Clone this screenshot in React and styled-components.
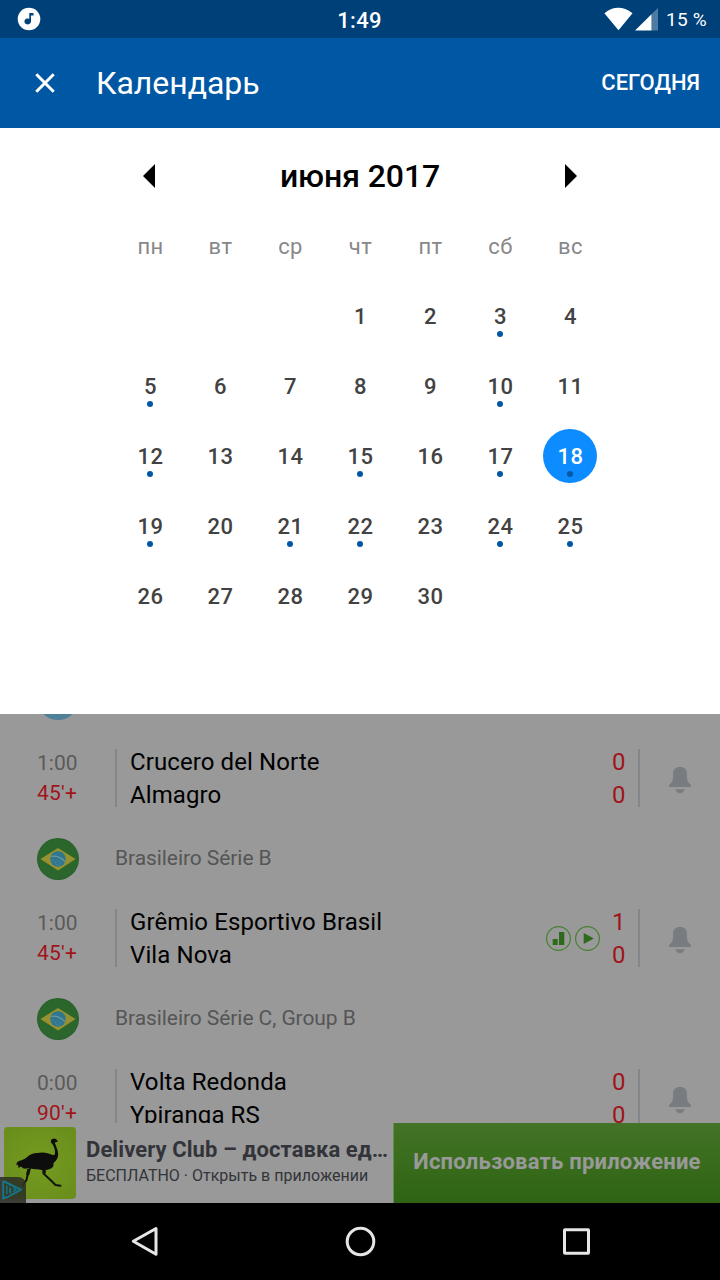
import React from 'react'
import styled, { createGlobalStyle } from 'styled-components'

const weekDays = ['пн', 'вт', 'ср', 'чт', 'пт', 'сб', 'вс']
const matchDays = [3, 5, 10, 12, 15, 17, 18, 19, 21, 22, 24, 25]
const selectedDay = 18
const firstDayOffset = 3
const days = Array.from({ length: 30 }, (_, i) => i + 1)

const sections = [
    {
        flag: 'argentina',
        league: '',
        time: '1:00',
        status: "45'+",
        teams: ['Crucero del Norte', 'Almagro'],
        score: [0, 0],
    },
    {
        flag: 'brazil',
        league: 'Brasileiro Série B',
        time: '1:00',
        status: "45'+",
        teams: ['Grêmio Esportivo Brasil', 'Vila Nova'],
        score: [1, 0],
        media: true,
    },
    {
        flag: 'brazil',
        league: 'Brasileiro Série C, Group B',
        time: '0:00',
        status: "90'+",
        teams: ['Volta Redonda', 'Ypiranga RS'],
        score: [0, 0],
    },
]

const Flag = ({ country }) => (
    <svg width="42" height="42" viewBox="0 0 42 42">
        {country === 'argentina' ? (
            <circle cx="21" cy="21" r="21" fill="#4f8199" />
        ) : (
            <>
                <circle cx="21" cy="21" r="21" fill="#286029" />
                <circle cx="21" cy="21" r="20" fill="#2b672d" />
                <path d="M3.500 21 21 10 38.500 21 21 32.500Z" fill="#98912f" />
                <circle cx="21" cy="21" r="7.800" fill="#2f7690" />
                <path d="M13.800 18.500Q21 16.800 28 23.500" fill="none" stroke="#6f9a9c" strokeWidth="1.100" />
                <path
                    d="M15.500 22.500h1M18 24.500h1M20.500 23h1M23 25h1M19.500 26.800h1M22 27.200h1"
                    stroke="#5d92a0"
                    strokeWidth="1"
                />
            </>
        )}
    </svg>
)

const BellIcon = () => (
    <svg width="24" height="28" viewBox="0 0 24 28">
        <path
            d="M12 1C7.500 1 5 3.700 5 8V12C5 15 3.500 16.500 1.500 18.800 .800 19.700 .700 21 1.500 21H22.500C23.300 21 23.200 19.700 22.500 18.800 20.500 16.500 19 15 19 12V8C19 3.700 16.500 1 12 1Z"
            fill="#777c80"
        />
        <path d="M7.500 23.300H16.500C15.800 26 14 27.300 12 27.300S8.200 26 7.500 23.300Z" fill="#777c80" />
    </svg>
)

const MediaIcons = () => (
    <svg width="54" height="26" viewBox="0 0 54 26">
        <g fill="none" stroke="#478031" strokeWidth="1.200">
            <circle cx="12.500" cy="13.500" r="11.900" />
            <circle cx="41.500" cy="13.500" r="11.900" />
        </g>
        <path d="M6.700 14H11.700V20H6.700ZM13 7H18.300V20H13ZM37.700 8 47.800 13.500 37.700 19Z" fill="#2d6b1b" />
    </svg>
)

const OstrichIcon = () => (
    <svg width="72" height="72" viewBox="0 0 72 72">
        <path
            d="M47 13Q49 10.500 52 12L54 14.500 50.800 15.500Q52 19 53.500 23Q55 29 53 32Q52 34 49.500 36Q50 40 47 41.500Q42 44 35 42.500Q29 42 24 41Q20 43 17 39.500L14.500 41 14 37.500 12.500 38.500Q12 35 15 34Q18 33.500 22 31Q27 26 33 26Q41 24.500 46 27Q50 29 51 27Q51.500 23 49.500 19Q48.500 16.500 47 15.500Z"
            fill="#0d0d0e"
        />
        <path
            d="M26 41 23.500 48 22.500 53 19 58M39.500 42.500V46.500L47 53.500 51.500 58 56.500 58.700"
            fill="none"
            stroke="#11140c"
            strokeWidth="2"
            strokeLinejoin="round"
            strokeLinecap="round"
        />
        <path d="M25 42 23.500 48M40.200 43V46.500" stroke="#11140c" strokeWidth="3.200" />
    </svg>
)

const AdChoicesIcon = () => (
    <svg width="22" height="22" viewBox="0 0 22 22">
        <path d="M2.200 2 20 10.600 5 19M2.200 2V19.500L5.500 18" fill="none" stroke="#147588" strokeWidth="2" strokeLinejoin="round" />
        <path d="M5.800 6.500V15.200M12 8.500 15 10.600 12 12.500" fill="none" stroke="#147588" strokeWidth="1.500" />
        <path d="M9.200 8.700V14.500M9.200 5.500V7.300" stroke="#147588" strokeWidth="2" />
    </svg>
)

const Section = ({ flag, league, time, status, teams, score, media }) => (
    <>
        <LeagueRow>
            <FlagCell>
                <Flag country={flag} />
            </FlagCell>
            <span>{league}</span>
        </LeagueRow>
        <MatchRow>
            <MatchTime>
                <span>{time}</span>
                <Live>{status}</Live>
            </MatchTime>
            <Teams>
                {teams.map((team) => (
                    <span key={team}>{team}</span>
                ))}
            </Teams>
            {media && <MediaIcons />}
            <Score>
                <span>{score[0]}</span>
                <span>{score[1]}</span>
            </Score>
            <BellCell>
                <BellIcon />
            </BellCell>
        </MatchRow>
    </>
)

const App = () => {
    return (
        <Screen>
            <GlobalStyle />
            <StatusBar>
                <StatusSide>
                    <svg width="24" height="24" viewBox="0 0 24 24">
                        <circle cx="12" cy="12" r="11.300" fill="#fff" />
                        <path d="M12.300 6H16.500V8.500H14V14.500A3.300 3 0 1 1 12.300 11.800Z" fill="#00427a" />
                    </svg>
                </StatusSide>
                <Clock>1:49</Clock>
                <StatusSide $end>
                    <svg width="54" height="24" viewBox="0 0 54 24">
                        <path d="M.400 6.200Q14 -4.500 28.500 6.200L14.500 23.200Z" fill="#fff" />
                        <path d="M47.500 7.200V23.500H54V1Z" fill="#4d7ba2" />
                        <path d="M31 23.500H47.500V7.200Z" fill="#fff" />
                    </svg>
                    <Battery>15 %</Battery>
                </StatusSide>
            </StatusBar>

            <Toolbar>
                <svg width="22" height="22" viewBox="0 0 22 22">
                    <path d="M2.300 2.300 19.700 19.700M19.700 2.300 2.300 19.700" stroke="#fff" strokeWidth="3" />
                </svg>
                <Title>Календарь</Title>
                <TodayButton>СЕГОДНЯ</TodayButton>
            </Toolbar>

            <Calendar>
                <MonthBar>
                    <svg width="12" height="24" viewBox="0 0 12 24">
                        <path d="M12 0V24L0 12Z" />
                    </svg>
                    <Month>июня 2017</Month>
                    <svg width="12" height="24" viewBox="0 0 12 24">
                        <path d="M0 0V24L12 12Z" />
                    </svg>
                </MonthBar>
                <Grid>
                    {weekDays.map((name) => (
                        <WeekDay key={name}>{name}</WeekDay>
                    ))}
                    {days.map((day) => (
                        <Day key={day} $first={day === 1} $selected={day === selectedDay}>
                            {day}
                            {matchDays.includes(day) && <Dot $selected={day === selectedDay} />}
                        </Day>
                    ))}
                </Grid>
            </Calendar>

            <MatchList>
                {sections.map((section) => (
                    <Section key={section.teams[0]} {...section} />
                ))}
            </MatchList>

            <Ad>
                <AdLogo>
                    <OstrichIcon />
                </AdLogo>
                <AdChoices>
                    <AdChoicesIcon />
                </AdChoices>
                <AdText>
                    <AdTitle>Delivery Club – доставка ед…</AdTitle>
                    <AdSubtitle>БЕСПЛАТНО · Открыть в приложении</AdSubtitle>
                </AdText>
                <AdButton>Использовать приложение</AdButton>
            </Ad>

            <NavBar>
                <svg width="32" height="32" viewBox="0 0 32 32">
                    <path d="M28 3.500V29.300L5.300 16.300Z" />
                </svg>
                <svg width="32" height="32" viewBox="0 0 32 32">
                    <circle cx="16.500" cy="16.500" r="13.300" />
                </svg>
                <svg width="32" height="32" viewBox="0 0 32 32">
                    <rect x="4.500" y="4.700" width="24" height="23.500" rx=".5" />
                </svg>
            </NavBar>
        </Screen>
    )
}

export default App

const GlobalStyle = createGlobalStyle`
body {
    margin: 0;
    font-family: Roboto, sans-serif;
}
svg {
    display: block;
    flex-shrink: 0;
}
`

const Screen = styled.div`
display: flex;
flex-direction: column;
width: 720px;
height: 1280px;
overflow: hidden;
background-color: #999;
white-space: nowrap;
`

const StatusBar = styled.header`
display: flex;
align-items: center;
height: 38px;
padding: 0 13px 0 17px;
box-sizing: border-box;
background-color: #004078;
color: white;
`

const StatusSide = styled.div`
display: flex;
flex: 1;
align-items: center;
justify-content: ${(props) => (props.$end ? 'flex-end' : 'flex-start')};
`

const Clock = styled.span`
font-size: 22px;
font-weight: 500;
letter-spacing: 0.3px;
padding: 2px 5px 0 0;
`

const Battery = styled.span`
margin-left: 8px;
font-size: 19px;
letter-spacing: 0.25px;
`

const Toolbar = styled.div`
display: flex;
align-items: center;
height: 90px;
padding: 0 20px 0 34px;
box-sizing: border-box;
background-color: #0057a4;
color: white;
`

const Title = styled.h1`
flex: 1;
margin: 0 0 0 40px;
font-size: 32px;
font-weight: 400;
letter-spacing: -0.05px;
`

const TodayButton = styled.button`
padding: 0 0 2px;
border: 0;
background: none;
color: inherit;
font: 500 22px Roboto, sans-serif;
`

const Calendar = styled.section`
height: 586px;
padding: 13px 115px 0;
box-sizing: border-box;
background-color: white;
`

const MonthBar = styled.div`
display: flex;
align-items: center;
justify-content: space-between;
height: 70px;
padding: 0 28px;
`

const Month = styled.h2`
margin: 0;
font-size: 32px;
font-weight: 500;
letter-spacing: -0.1px;
`

const Grid = styled.div`
display: grid;
grid-template-columns: repeat(7, 70px);
grid-auto-rows: 70px;
justify-items: center;
align-items: center;
`

const WeekDay = styled.span`
padding-left: 1px;
color: #888;
font-size: 22px;
letter-spacing: 0.4px;
`

const Day = styled.div`
grid-column-start: ${(props) => (props.$first ? firstDayOffset + 1 : 'auto')};
position: relative;
display: flex;
align-items: center;
justify-content: center;
width: 54px;
height: 54px;
padding-left: 1px;
box-sizing: border-box;
border-radius: 50%;
background-color: ${(props) => (props.$selected ? '#0c8cff' : 'transparent')};
color: ${(props) => (props.$selected ? 'white' : '#424242')};
font-size: 22px;
font-weight: 500;
letter-spacing: 0.4px;
`

const Dot = styled.span`
position: absolute;
left: 24px;
bottom: 6px;
width: 6px;
height: 6px;
border-radius: 50%;
background-color: ${(props) => (props.$selected ? '#0859a5' : '#0057a4')};
`

const MatchList = styled.main`
display: flex;
flex-direction: column;
justify-content: flex-end;
height: 409px;
overflow: hidden;

& > :last-child {
    margin-bottom: -15px;
}
`

const LeagueRow = styled.div`
display: flex;
align-items: center;
flex-shrink: 0;
height: 80px;
color: #555;
font-size: 21px;
letter-spacing: -0.07px;
`

const FlagCell = styled.div`
width: 78px;
padding: 1px 0 0 37px;
`

const MatchRow = styled.div`
display: flex;
align-items: center;
flex-shrink: 0;
height: 80px;
`

const MatchTime = styled.div`
display: flex;
flex-direction: column;
width: 78px;
padding-left: 37px;
color: #5b5b5b;
font-size: 21px;
line-height: 30px;
`

const Live = styled.span`
color: #a0151b;
letter-spacing: 0.2px;
`

const Teams = styled.div`
display: flex;
flex: 1;
flex-direction: column;
height: 58px;
padding-left: 13px;
border-left: 2px solid #85858c;
font-size: 24px;
line-height: 33px;
letter-spacing: 0.1px;
box-sizing: border-box;

& > :first-child {
    margin-top: -3px;
}
`

const Score = styled.div`
display: flex;
flex-direction: column;
width: 40px;
height: 58px;
padding-left: 12px;
border-right: 2px solid #85858c;
box-sizing: border-box;
color: #a0151b;
font-size: 24px;
line-height: 33px;

& > :first-child {
    margin-top: -3px;
}
`

const BellCell = styled.div`
display: flex;
justify-content: center;
width: 80px;
padding-top: 3px;
`

const Ad = styled.aside`
position: relative;
display: flex;
height: 80px;
background-color: #999;
`

const AdLogo = styled.div`
width: 72px;
height: 72px;
margin: 4px 0 0 4px;
border-radius: 4px;
background: radial-gradient(circle, #759c20, #698c1c);
`

const AdChoices = styled.div`
position: absolute;
left: 0;
bottom: 0;
width: 26px;
height: 26px;
padding-left: 1px;
padding-top: 2px;
box-sizing: border-box;
border-top-right-radius: 8px;
background-color: rgba(45, 48, 38, 0.88);
`

const AdText = styled.div`
display: flex;
flex: 1;
flex-direction: column;
padding: 13px 0 0 10px;
color: #33343a;
`

const AdTitle = styled.strong`
font-size: 22px;
font-weight: 700;
line-height: 28px;
letter-spacing: 0.08px;
`

const AdSubtitle = styled.span`
font-size: 16px;
line-height: 24px;
`

const AdButton = styled.button`
width: 327px;
padding: 0 0 3px;
border: 0;
border-left: 1px solid #648d4f;
background: linear-gradient(#437326, #2e6413);
color: #999;
font: 700 22px Roboto, sans-serif;
letter-spacing: 0.22px;
`

const NavBar = styled.nav`
display: flex;
align-items: center;
justify-content: space-between;
height: 77px;
padding: 0 128px 1px;
box-sizing: border-box;
background-color: black;

svg {
    fill: none;
    stroke: #e6e6e6;
    stroke-width: 3;
    stroke-linejoin: round;
}
`
